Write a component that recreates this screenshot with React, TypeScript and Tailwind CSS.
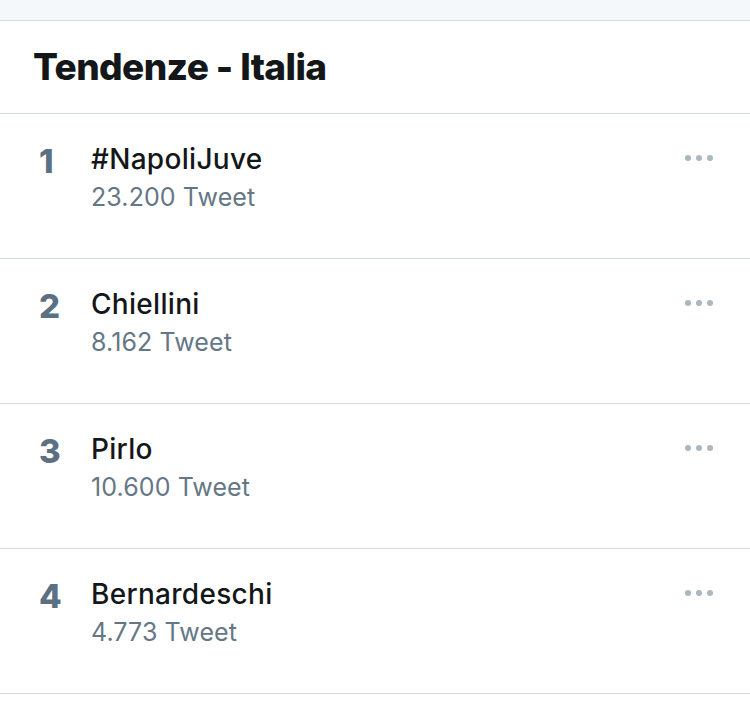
const trends = [
  { rank: 1, name: "#NapoliJuve", count: "23.200 Tweet" },
  { rank: 2, name: "Chiellini", count: "8.162 Tweet" },
  { rank: 3, name: "Pirlo", count: "10.600 Tweet" },
  { rank: 4, name: "Bernardeschi", count: "4.773 Tweet" },
];

function Dots() {
  return (
    <div className="flex gap-[5px]">
      <span className="h-[6px] w-[6px] rounded-full bg-[#aab8c2]" />
      <span className="h-[6px] w-[6px] rounded-full bg-[#aab8c2]" />
      <span className="h-[6px] w-[6px] rounded-full bg-[#aab8c2]" />
    </div>
  );
}

export default function App() {
  return (
    <div
      className="h-[707px] w-[750px] overflow-hidden bg-white"
      style={{ fontFamily: "Inter, 'Liberation Sans', sans-serif" }}
    >
      <div className="h-[21px] border-b border-[#d3dbe1] bg-[#f5f8fa]" />
      <div className="flex h-[93px] items-center border-b border-[#d3dbe1] px-[33px] pb-[2px]">
        <h1 className="text-[37px] font-extrabold leading-none tracking-[-0.6px] text-[#14171a]">
          Tendenze - Italia
        </h1>
      </div>
      {trends.map((t) => (
        <div
          key={t.rank}
          className="flex h-[145px] border-b border-[#d3dbe1] pl-[39px] pr-[37px] pt-[27px]"
        >
          <div className="w-[52px] text-[33px] font-extrabold leading-[40px] text-[#5b7083]">
            {t.rank}
          </div>
          <div className="flex-1">
            <div className="text-[28px] font-medium leading-[36px] tracking-[0.3px] text-[#14171a]">
              {t.name}
            </div>
            <div className="mt-[5px] text-[25px] leading-[30px] tracking-[0.1px] text-[#657786]">
              {t.count}
            </div>
          </div>
          <div className="pt-[14px]">
            <Dots />
          </div>
        </div>
      ))}
    </div>
  );
}
